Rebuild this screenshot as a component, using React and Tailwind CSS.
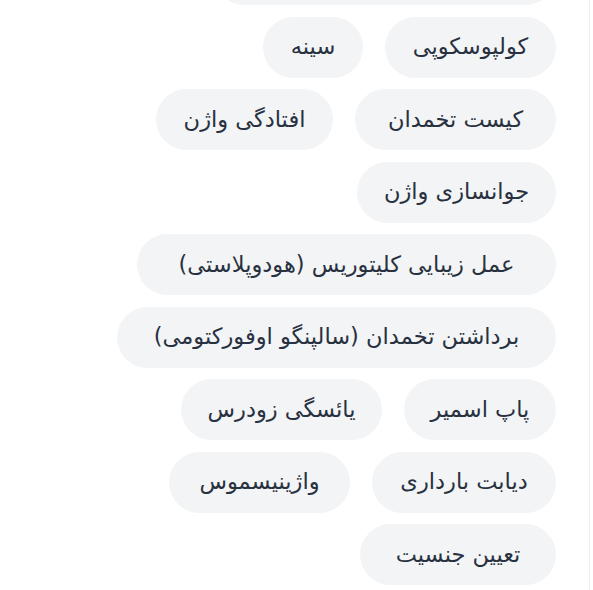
import React from "react";

const chips = [
  { t: "هیسترکتومی (برداشتن رحم)", w: "w-[342px]" },
  { t: "کولپوسکوپی", w: "w-[171px]" },
  { t: "سینه", w: "w-[100px]" },
  { t: "کیست تخمدان", w: "w-[201px]" },
  { t: "افتادگی واژن", w: "w-[177px]" },
  { t: "جوانسازی واژن", w: "w-[199px]" },
  { t: "عمل زیبایی کلیتوریس (هودوپلاستی)", w: "w-[419px]" },
  { t: "برداشتن تخمدان (سالپنگو اوفورکتومی)", w: "w-[439px]" },
  { t: "پاپ اسمیر", w: "w-[152px]" },
  { t: "یائسگی زودرس", w: "w-[201px]" },
  { t: "دیابت بارداری", w: "w-[184px]" },
  { t: "واژینیسموس", w: "w-[181px]" },
  { t: "تعیین جنسیت", w: "w-[196px]" },
];

export default function App() {
  return (
    <div className="flex h-[590px] w-[593px] overflow-hidden bg-white">
      <div className="w-[589px] shrink-0 overflow-hidden">
        <div
          dir="rtl"
          className="mt-[-56px] flex flex-wrap gap-x-[22px] gap-y-[11.5px] pl-[60px] pr-[33px]"
          style={{ fontFamily: '"DejaVu Sans", sans-serif' }}
        >
          {chips.map((c, i) => (
            <div
              key={i}
              className={`flex h-[61px] shrink-0 items-center justify-center rounded-full bg-[#f3f4f6] text-[22.5px] text-[#28313f] whitespace-nowrap ${c.w}`}
            >
              {c.t}
            </div>
          ))}
        </div>
      </div>
      <div className="w-px shrink-0 bg-[#eeeeee]" />
      <div className="w-[3px] shrink-0 bg-white" />
    </div>
  );
}
